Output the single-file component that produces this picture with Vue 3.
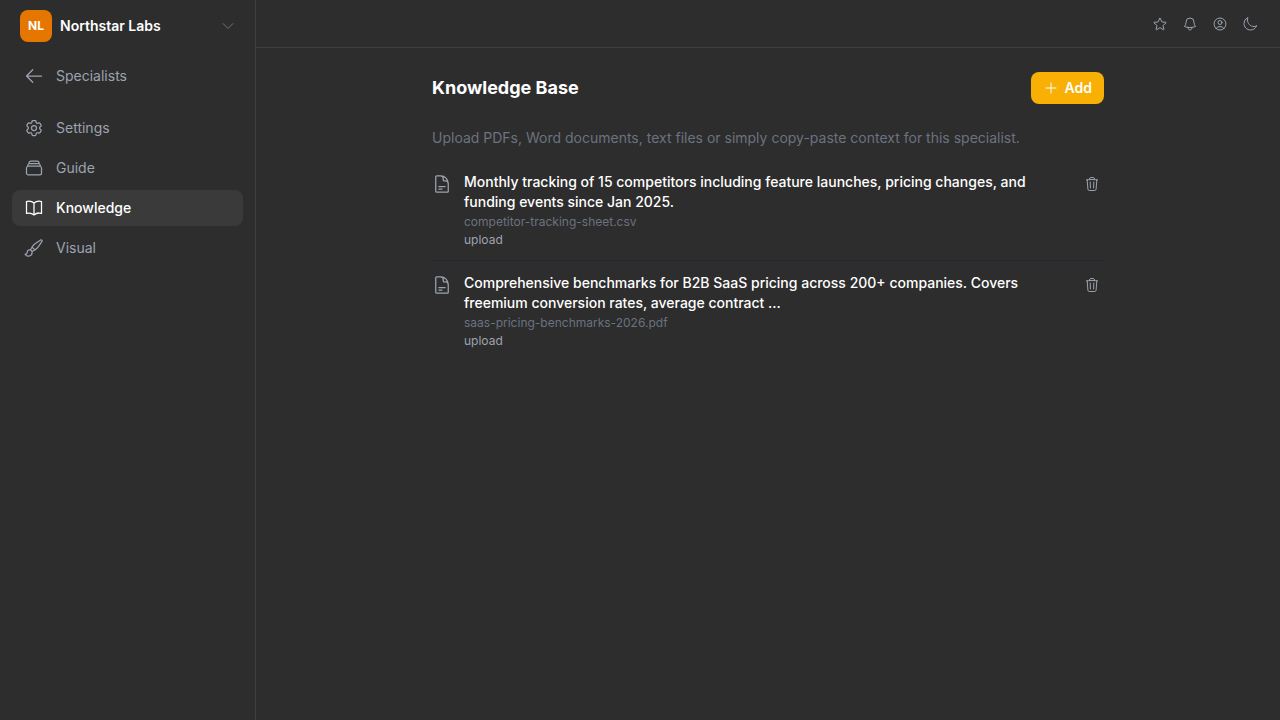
<script setup>
const navItems = [
  { label: 'Settings', paths: ['M9.594 3.94c.09-.542.56-.94 1.11-.94h2.593c.55 0 1.02.398 1.11.94l.213 1.281c.063.374.313.686.645.87.074.04.147.083.22.127.324.196.72.257 1.075.124l1.217-.456a1.125 1.125 0 011.37.49l1.296 2.247a1.125 1.125 0 01-.26 1.431l-1.003.827c-.293.24-.438.613-.431.992a6.759 6.759 0 010 .255c-.007.378.138.75.43.99l1.005.828c.424.35.534.954.26 1.43l-1.298 2.247a1.125 1.125 0 01-1.369.491l-1.217-.456c-.355-.133-.75-.072-1.076.124a6.57 6.57 0 01-.22.128c-.331.183-.581.495-.644.869l-.213 1.28c-.09.543-.56.941-1.11.941h-2.594c-.55 0-1.02-.398-1.11-.94l-.213-1.281c-.062-.374-.312-.686-.644-.87a6.52 6.52 0 01-.22-.127c-.325-.196-.72-.257-1.076-.124l-1.217.456a1.125 1.125 0 01-1.369-.49l-1.297-2.247a1.125 1.125 0 01.26-1.431l1.004-.827c.292-.24.437-.613.43-.992a6.932 6.932 0 010-.255c.007-.378-.138-.75-.43-.99l-1.004-.828a1.125 1.125 0 01-.26-1.43l1.297-2.247a1.125 1.125 0 011.37-.491l1.216.456c.356.133.751.072 1.076-.124.072-.044.146-.087.22-.128.332-.183.582-.495.644-.869l.214-1.281z', 'M15 12a3 3 0 11-6 0 3 3 0 016 0z'] },
  { label: 'Guide', paths: ['M6 6.878V6a2.25 2.25 0 012.25-2.25h7.5A2.25 2.25 0 0118 6v.878m-12 0c.235-.083.487-.128.75-.128h10.5c.263 0 .515.045.75.128m-12 0A2.25 2.25 0 004.5 9v.878m13.5-3A2.25 2.25 0 0119.5 9v.878m0 0a2.246 2.246 0 00-.75-.128H5.25c-.263 0-.515.045-.75.128m15 0A2.25 2.25 0 0121 12v6a2.25 2.25 0 01-2.25 2.25H5.25A2.25 2.25 0 013 18v-6c0-.98.626-1.813 1.5-2.122'] },
  { label: 'Knowledge', active: true, paths: ['M12 6.042A8.967 8.967 0 006 3.75c-1.052 0-2.062.18-3 .512v14.25A8.987 8.987 0 016 18c2.305 0 4.408.867 6 2.292m0-14.25a8.966 8.966 0 016-2.292c1.052 0 2.062.18 3 .512v14.25A8.987 8.987 0 0018 18a8.967 8.967 0 00-6 2.292m0-14.25v14.25'] },
  { label: 'Visual', paths: ['M9.53 16.122a3 3 0 00-5.78 1.128 2.25 2.25 0 01-2.4 2.245 4.5 4.5 0 008.4-2.245c0-.399-.078-.78-.22-1.128zm0 0a15.998 15.998 0 003.388-1.62m-5.043-.025a15.994 15.994 0 011.622-3.395m3.42 3.42a15.995 15.995 0 004.764-4.648l3.876-5.814a1.151 1.151 0 00-1.597-1.597L14.146 6.32a15.996 15.996 0 00-4.649 4.763m3.42 3.42a6.776 6.776 0 00-3.42-3.42'] }
]
const topIcons = [
  ['M11.48 3.499a.562.562 0 011.04 0l2.125 5.111a.563.563 0 00.475.345l5.518.442c.499.04.701.663.321.988l-4.204 3.602a.563.563 0 00-.182.557l1.285 5.385a.562.562 0 01-.84.61l-4.725-2.885a.563.563 0 00-.586 0L6.982 20.54a.562.562 0 01-.84-.61l1.285-5.386a.562.562 0 00-.182-.557l-4.204-3.602a.563.563 0 01.321-.988l5.518-.442a.563.563 0 00.475-.345L11.48 3.5z'],
  ['M14.857 17.082a23.848 23.848 0 005.454-1.31A8.967 8.967 0 0118 9.75v-.7V9A6 6 0 006 9v.75a8.967 8.967 0 01-2.312 6.022c1.733.64 3.56 1.085 5.455 1.31m5.714 0a24.255 24.255 0 01-5.714 0m5.714 0a3 3 0 11-5.714 0'],
  ['M17.982 18.725A7.488 7.488 0 0012 15.75a7.488 7.488 0 00-5.982 2.975m11.963 0a9 9 0 10-11.963 0m11.963 0A8.966 8.966 0 0112 21a8.966 8.966 0 01-5.982-2.275M15 9.75a3 3 0 11-6 0 3 3 0 016 0z'],
  ['M21.752 15.002A9.718 9.718 0 0118 15.75c-5.385 0-9.75-4.365-9.75-9.75 0-1.33.266-2.597.748-3.752A9.753 9.753 0 003 11.25C3 16.635 7.365 21 12.75 21a9.753 9.753 0 009.002-5.998z']
]
const docs = [
  { title: 'Monthly tracking of 15 competitors including feature launches, pricing changes, and funding events since Jan 2025.', file: 'competitor-tracking-sheet.csv', source: 'upload' },
  { title: 'Comprehensive benchmarks for B2B SaaS pricing across 200+ companies. Covers freemium conversion rates, average contract ...', file: 'saas-pricing-benchmarks-2026.pdf', source: 'upload' }
]
const docPath = 'M19.5 14.25v-2.625a3.375 3.375 0 00-3.375-3.375h-1.5A1.125 1.125 0 0113.5 7.125v-1.5a3.375 3.375 0 00-3.375-3.375H8.25m0 12.75h7.5m-7.5 3H12M10.5 2.25H5.625c-.621 0-1.125.504-1.125 1.125v17.25c0 .621.504 1.125 1.125 1.125h12.75c.621 0 1.125-.504 1.125-1.125V11.25a9 9 0 00-9-9z'
const trashPath = 'M14.74 9l-.346 9m-4.788 0L9.26 9m9.968-3.21c.342.052.682.107 1.022.166m-1.022-.165L18.16 19.673a2.25 2.25 0 01-2.244 2.077H8.084a2.25 2.25 0 01-2.244-2.077L4.772 5.79m14.456 0a48.108 48.108 0 00-3.478-.397m-12 .562c.34-.059.68-.114 1.022-.165m0 0a48.11 48.11 0 013.478-.397m7.5 0v-.916c0-1.18-.91-2.164-2.09-2.201a51.964 51.964 0 00-3.32 0c-1.18.037-2.09 1.022-2.09 2.201v.916m7.5 0a48.667 48.667 0 00-7.5 0'
</script>

<template>
  <div class="app">
    <aside class="sidebar">
      <div class="org">
        <span class="logo">NL</span>
        <span class="org-name">Northstar Labs</span>
        <svg class="icon-16 chevron" viewBox="0 0 24 24"><path d="M19.5 8.25l-7.5 7.5-7.5-7.5" /></svg>
      </div>
      <a class="nav-item back">
        <svg class="icon-20" viewBox="0 0 24 24"><path d="M10.5 19.5L3 12m0 0l7.5-7.5M3 12h18" /></svg>
        <span>Specialists</span>
      </a>
      <nav class="nav">
        <a v-for="item in navItems" :key="item.label" class="nav-item" :class="{ active: item.active }">
          <svg class="icon-20" viewBox="0 0 24 24"><path v-for="p in item.paths" :key="p" :d="p" /></svg>
          <span>{{ item.label }}</span>
        </a>
      </nav>
    </aside>
    <div class="main">
      <header class="topbar">
        <svg v-for="(icon, i) in topIcons" :key="i" class="icon-16" viewBox="0 0 24 24"><path v-for="p in icon" :key="p" :d="p" /></svg>
      </header>
      <main class="content">
        <div class="head">
          <h1>Knowledge Base</h1>
          <button class="add" type="button">
            <svg class="icon-16" viewBox="0 0 24 24"><path d="M12 4.5v15m7.5-7.5h-15" /></svg>
            Add
          </button>
        </div>
        <p class="intro">Upload PDFs, Word documents, text files or simply copy-paste context for this specialist.</p>
        <ul class="docs">
          <li v-for="doc in docs" :key="doc.file" class="doc">
            <svg class="icon-20 doc-icon" viewBox="0 0 24 24"><path :d="docPath" /></svg>
            <div class="doc-body">
              <div class="doc-title">{{ doc.title }}</div>
              <div class="doc-file">{{ doc.file }}</div>
              <div class="doc-source">{{ doc.source }}</div>
            </div>
            <svg class="icon-16 trash" viewBox="0 0 24 24"><path :d="trashPath" /></svg>
          </li>
        </ul>
      </main>
    </div>
  </div>
</template>

<style scoped>
.app {
  display: flex;
  height: 720px;
  background: #2d2d2d;
  font-family: Inter, "Liberation Sans", sans-serif;
  color: #fff;
  overflow: hidden;
}
svg {
  fill: none;
  stroke: currentColor;
  stroke-width: 1.5;
  stroke-linecap: round;
  stroke-linejoin: round;
  flex: none;
}
.icon-16 { width: 16px; height: 16px; }
.icon-20 { width: 20px; height: 20px; }
.sidebar {
  width: 256px;
  flex: none;
  box-sizing: border-box;
  border-right: 1px solid #404040;
  padding: 10px 12px 0;
}
.org {
  display: flex;
  align-items: center;
  height: 32px;
  padding: 0 7px 0 8px;
  margin-bottom: 16px;
}
.logo {
  width: 32px;
  height: 32px;
  border-radius: 8px;
  background: #e57700;
  display: flex;
  align-items: center;
  justify-content: center;
  font-size: 12px;
  line-height: 16px;
  font-weight: 700;
  flex: none;
}
.org-name {
  margin-left: 8px;
  font-size: 14px;
  line-height: 20px;
  font-weight: 600;
  flex: 1;
}
.chevron { color: #6b7280; }
.nav-item {
  display: flex;
  align-items: center;
  gap: 12px;
  height: 36px;
  padding: 0 12px;
  border-radius: 8px;
  font-size: 14px;
  line-height: 20px;
  font-weight: 400;
  color: #9ca3af;
}
.nav-item.active {
  background: #3a3a3a;
  color: #fff;
  font-weight: 500;
}
.back { margin-bottom: 16px; }
.nav {
  display: flex;
  flex-direction: column;
  gap: 4px;
}
.main {
  flex: 1;
  min-width: 0;
}
.topbar {
  height: 48px;
  box-sizing: border-box;
  border-bottom: 1px solid #404040;
  display: flex;
  align-items: center;
  justify-content: flex-end;
  gap: 14px;
  padding: 0 22px;
  color: #9ca3af;
}
.content {
  width: 672px;
  margin: 0 auto;
  padding-top: 24px;
}
.head {
  display: flex;
  align-items: center;
  justify-content: space-between;
  height: 32px;
}
h1 {
  margin: 0;
  font-size: 18px;
  line-height: 28px;
  font-weight: 700;
}
.add {
  display: flex;
  align-items: center;
  gap: 6px;
  height: 32px;
  padding: 0 12px;
  border: 0;
  border-radius: 8px;
  background: #f8b005;
  color: #fff;
  font: 600 14px/20px Inter, "Liberation Sans", sans-serif;
}
.intro {
  margin: 24px 0 12px;
  font-size: 14px;
  line-height: 20px;
  color: #6b7280;
}
.docs {
  list-style: none;
  margin: 0;
  padding: 0;
}
.doc {
  display: flex;
  align-items: flex-start;
  gap: 12px;
  padding: 12px 4px 12px 0;
  border-bottom: 1px solid #1f2937;
}
.doc:last-child { border-bottom: 0; }
.doc-icon { color: #9ca3af; margin-top: 2px; }
.doc-body { flex: 1; min-width: 0; padding-right: 32px; }
.doc-title {
  font-size: 14px;
  line-height: 20px;
  font-weight: 500;
}
.doc-file {
  margin-top: 2px;
  font-size: 12px;
  line-height: 16px;
  color: #6b7280;
}
.doc-source {
  margin-top: 2px;
  font-size: 12px;
  line-height: 16px;
  color: #9ca3af;
}
.trash { color: #9ca3af; margin-top: 4px; }
</style>

<style>
html, body { background: #2d2d2d; }
</style>
